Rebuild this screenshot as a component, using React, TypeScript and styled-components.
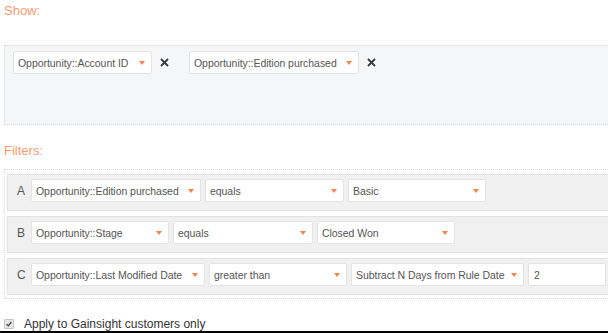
import React from "react";
import styled, { createGlobalStyle } from "styled-components";

const GlobalStyle = createGlobalStyle`
  body {
    margin: 0;
    background: #fff;
    font-family: "Liberation Sans", Arial, sans-serif;
    overflow: hidden;
  }
`;

const Page = styled.div`
  width: 608px;
  height: 333px;
  padding-left: 4px;
  box-sizing: border-box;
  display: flex;
  flex-direction: column;
  overflow: hidden;
`;

const SectionLabel = styled.div<{ $top: number }>`
  margin-top: ${(p) => p.$top}px;
  font-size: 13px;
  line-height: 16px;
  color: #f89b74;
`;

const ShowBox = styled.div`
  margin-top: 26px;
  margin-right: -12px;
  height: 80px;
  box-sizing: border-box;
  background: #f5f6f8;
  border: 1px dotted #d6d6d6;
  padding: 5px 8px;
  display: flex;
  align-items: flex-start;
`;

const ShowItem = styled.div`
  display: flex;
  align-items: center;
  & + & {
    margin-left: 20px;
  }
`;

const Remove = styled.span`
  margin-left: 8px;
  width: 9px;
  height: 9px;
  display: flex;
  svg {
    display: block;
  }
`;

const SelectBox = styled.div<{ $w: number }>`
  width: ${(p) => p.$w}px;
  height: 23px;
  box-sizing: border-box;
  background: #fff;
  border: 1px solid #e4e4e4;
  border-radius: 2px;
  padding: 0 6px 0 4px;
  display: flex;
  align-items: center;
  gap: 4px;
  font-size: 10.5px;
  letter-spacing: -0.05px;
  color: #555;
  white-space: nowrap;
  span:first-child {
    flex: 1;
  }
`;

const Arrow = styled.span`
  width: 0;
  height: 0;
  border-left: 3.5px solid transparent;
  border-right: 3.5px solid transparent;
  border-top: 4px solid #f5834a;
  flex-shrink: 0;
`;

const FilterBox = styled.div`
  margin-top: 10px;
  margin-right: -12px;
  border: 1px dotted #d9d9d9;
  padding: 4px 0 3px 2px;
  display: flex;
  flex-direction: column;
  gap: 5px;
`;

const FilterRow = styled.div`
  height: 37px;
  box-sizing: border-box;
  background: #f0f0f0;
  border: 1px solid #e2e2e2;
  padding: 4px 0 8px;
  display: flex;
  align-items: center;
  gap: 4px;
`;

const RowLetter = styled.span`
  width: 19px;
  box-sizing: border-box;
  padding-left: 9px;
  font-size: 12px;
  color: #555;
`;

const ValueInput = styled.div<{ $w: number }>`
  width: ${(p) => p.$w}px;
  height: 23px;
  box-sizing: border-box;
  background: #fff;
  border: 1px solid #e4e4e4;
  border-radius: 2px;
  padding-left: 5px;
  display: flex;
  align-items: center;
  font-size: 10.5px;
  color: #555;
`;

const CheckRow = styled.label`
  margin-top: 17px;
  height: 15px;
  display: flex;
  align-items: center;
  gap: 10px;
  font-size: 12px;
  color: #333;
`;

const CheckMark = styled.span`
  width: 8px;
  height: 8px;
  border: 1px solid #c4c4c4;
  border-radius: 1px;
  background: #e6e6e6;
  display: flex;
  align-items: center;
  justify-content: center;
  svg {
    display: block;
  }
`;

const BottomEdge = styled.div`
  margin-top: auto;
  margin-left: -4px;
  height: 2px;
  background: #000;
`;

function Select({ label, width }: { label: string; width: number }) {
  return (
    <SelectBox $w={width}>
      <span>{label}</span>
      <Arrow />
    </SelectBox>
  );
}

const shown = [
  { label: "Opportunity::Account ID", width: 139 },
  { label: "Opportunity::Edition purchased", width: 170 },
];

const filters = [
  {
    letter: "A",
    parts: [
      { label: "Opportunity::Edition purchased", width: 170 },
      { label: "equals", width: 139 },
      { label: "Basic", width: 138 },
    ],
  },
  {
    letter: "B",
    parts: [
      { label: "Opportunity::Stage", width: 138 },
      { label: "equals", width: 140 },
      { label: "Closed Won", width: 138 },
    ],
  },
  {
    letter: "C",
    parts: [
      { label: "Opportunity::Last Modified Date", width: 174 },
      { label: "greater than", width: 138 },
      { label: "Subtract N Days from Rule Date", width: 173 },
    ],
    value: "2",
  },
];

export default function App() {
  return (
    <>
      <GlobalStyle />
      <Page>
        <SectionLabel $top={3}>Show:</SectionLabel>
        <ShowBox>
          {shown.map((s) => (
            <ShowItem key={s.label}>
              <Select label={s.label} width={s.width} />
              <Remove>
                <svg width="9" height="9" viewBox="0 0 9 9">
                  <path d="M1 1L8 8M8 1L1 8" stroke="#3a3a3a" strokeWidth="1.8" />
                </svg>
              </Remove>
            </ShowItem>
          ))}
        </ShowBox>

        <SectionLabel $top={18}>Filters:</SectionLabel>
        <FilterBox>
          {filters.map((f) => (
            <FilterRow key={f.letter}>
              <RowLetter>{f.letter}</RowLetter>
              {f.parts.map((p) => (
                <Select key={p.label} label={p.label} width={p.width} />
              ))}
              {f.value && <ValueInput $w={78}>{f.value}</ValueInput>}
            </FilterRow>
          ))}
        </FilterBox>

        <CheckRow>
          <CheckMark>
            <svg width="6" height="6" viewBox="0 0 6 6">
              <path d="M0.6 3.2L2.3 4.8L5.4 1" stroke="#444" strokeWidth="1.3" fill="none" />
            </svg>
          </CheckMark>
          Apply to Gainsight customers only
        </CheckRow>
        <BottomEdge />
      </Page>
    </>
  );
}
